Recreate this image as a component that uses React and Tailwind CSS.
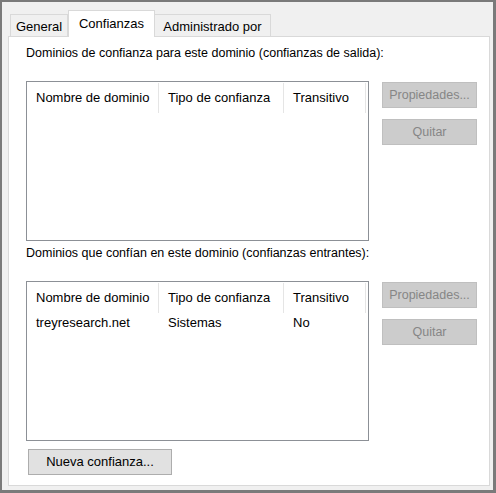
import React from 'react';

const columns = [
    { name: 'Nombre de dominio', width: 'w-[132px]' },
    { name: 'Tipo de confianza', width: 'w-[125px]' },
    { name: 'Transitivo', width: 'w-[82px]' },
];

const TrustList = ({ rows }) => (
    <div className="w-[343px] h-[160px] bg-white border border-[#8c9096] flex flex-col">
        {/* Header */}
        <div className="flex h-[30px] mt-px shrink-0">
            {columns.map((col) => (
                <div
                    key={col.name}
                    className={`${col.width} h-full flex items-center pl-[9px] border-r border-[#e5e5e5]`}
                >
                    {col.name}
                </div>
            ))}
        </div>

        {/* Rows */}
        {rows.map((row) => (
            <div key={row[0]} className="flex h-[20px] items-center">
                {row.map((cell, i) => (
                    <div key={i} className={`${columns[i].width} pl-[9px]`}>
                        {cell}
                    </div>
                ))}
            </div>
        ))}
    </div>
);

const DisabledButton = ({ children }) => (
    <div className="w-[95px] h-[26px] flex items-center justify-center bg-[#cccccc] border border-[#bfbfbf] text-[#868686] text-[12.5px]">
        {children}
    </div>
);

const TrustSection = ({ label, rows }) => (
    <>
        <div className="leading-4 h-4 text-[12.5px]">{label}</div>
        <div className="flex mt-[20px]">
            <TrustList rows={rows} />
            <div className="flex flex-col gap-[11px] ml-[13px] mt-px">
                <DisabledButton>Propiedades...</DisabledButton>
                <DisabledButton>Quitar</DisabledButton>
            </div>
        </div>
    </>
);

export default function App() {
    const tabs = [
        { name: 'General', width: 'w-[58px]' },
        { name: 'Confianzas', width: 'w-[87px]', active: true },
        { name: 'Administrado por', width: 'w-[117px]' },
    ];

    return (
        <div
            className="w-[496px] h-[493px] bg-[#f0f0f0] border-l-2 border-t-2 border-r-[3px] border-b-[3px] border-[#7a7a7a] flex flex-col pl-[6px] pr-[3px] pt-[8px] pb-[4px] text-[13px] text-black"
            style={{ fontFamily: '"Liberation Sans", Arial, sans-serif' }}
        >
            {/* Tabs */}
            <div className="flex items-end h-[26px] pl-[2px] relative z-10 shrink-0">
                {tabs.map((tab) =>
                    tab.active ? (
                        <div
                            key={tab.name}
                            className={`${tab.width} h-[27px] -mb-px bg-white border-t border-l border-r border-[#d9d9d9] flex justify-center pt-[5px] leading-4`}
                        >
                            {tab.name}
                        </div>
                    ) : (
                        <div
                            key={tab.name}
                            className={`${tab.width} h-[22px] bg-[#f0f0f0] border-t border-l border-r border-[#d9d9d9] -ml-px first:ml-0 flex justify-center pt-[4px] leading-4`}
                        >
                            {tab.name}
                        </div>
                    )
                )}
            </div>

            {/* Panel */}
            <div className="flex-1 bg-white border border-[#d9d9d9] pl-[17px] pt-[8px] flex flex-col">
                <TrustSection
                    label="Dominios de confianza para este dominio (confianzas de salida):"
                    rows={[]}
                />
                <div className="mt-[4px]" />
                <TrustSection
                    label="Dominios que confían en este dominio (confianzas entrantes):"
                    rows={[['treyresearch.net', 'Sistemas', 'No']]}
                />
                <div className="mt-[8px] ml-[2px] w-[144px] h-[26px] flex items-center justify-center bg-[#e1e1e1] border border-[#adadad]">
                    Nueva confianza...
                </div>
            </div>
        </div>
    );
}
